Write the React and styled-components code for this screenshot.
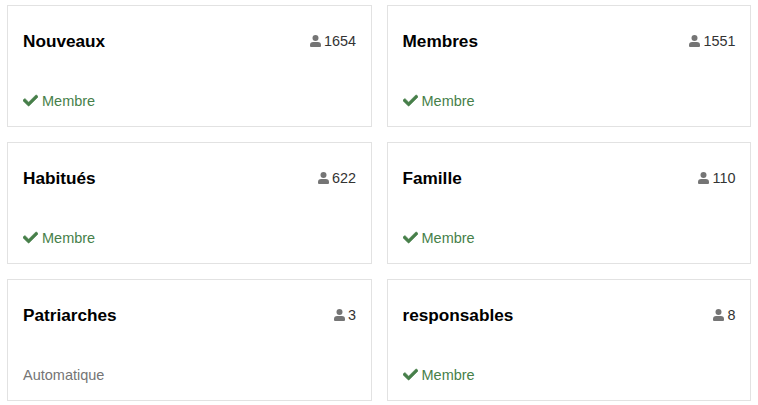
import React from "react";
import styled, { createGlobalStyle } from "styled-components";
import { FaCheck } from "react-icons/fa";

const groups = [
  { name: "Nouveaux", count: 1654, member: true },
  { name: "Membres", count: 1551, member: true },
  { name: "Habitués", count: 622, member: true },
  { name: "Famille", count: 110, member: true },
  { name: "Patriarches", count: 3, member: false },
  { name: "responsables", count: 8, member: true },
];

const UserIcon = () => (
  <svg viewBox="0 0 11 12" fill="currentColor">
    <circle cx="5.5" cy="3" r="3" />
    <path d="M3.2 6.9h4.6A3.2 3.2 0 0 1 11 10.1v.8A1.1 1.1 0 0 1 9.9 12H1.1A1.1 1.1 0 0 1 0 10.9v-.8A3.2 3.2 0 0 1 3.2 6.9z" />
  </svg>
);

const App = () => {
  return (
    <>
      <GlobalStyle />
      <GroupGrid>
        {groups.map((group) => (
          <GroupBox key={group.name}>
            <GroupHead>
              <h3>{group.name}</h3>
              <Count>
                <UserIcon />
                <span>{group.count}</span>
              </Count>
            </GroupHead>
            <Status $member={group.member}>
              {group.member && <FaCheck />}
              <span>{group.member ? "Membre" : "Automatique"}</span>
            </Status>
          </GroupBox>
        ))}
      </GroupGrid>
    </>
  );
};

const GlobalStyle = createGlobalStyle`
  * {
    box-sizing: border-box;
  }
  body {
    margin: 0;
    background: white;
    font-family: "Liberation Sans", Arial, sans-serif;
    overflow: hidden;
  }
`;

const GroupGrid = styled.div`
  display: grid;
  grid-template-columns: 1fr 1fr;
  grid-auto-rows: 122px;
  gap: 15px;
  padding: 5px 7px 0;
`;

const GroupBox = styled.div`
  display: flex;
  flex-direction: column;
  justify-content: space-between;
  border: 1px solid #e2e2e2;
  padding: 25px 14.6px 15px 15px;
`;

const GroupHead = styled.div`
  display: flex;
  justify-content: space-between;
  align-items: flex-start;
  h3 {
    margin: 0;
    font-size: 17.2px;
    line-height: 21px;
    color: black;
  }
`;

const Count = styled.div`
  display: flex;
  align-items: center;
  gap: 3.4px;
  font-size: 14.4px;
  line-height: 20px;
  color: #333;
  svg {
    width: 11px;
    height: 12px;
    color: #757575;
  }
`;

const Status = styled.div`
  display: flex;
  align-items: center;
  gap: 4px;
  font-size: 14.5px;
  line-height: 20px;
  color: ${(props) => (props.$member ? "#477f4a" : "#757575")};
  svg {
    width: 15px;
    height: 15px;
    stroke-width: 20px;
    margin-bottom: 1px;
  }
`;

export default App;
